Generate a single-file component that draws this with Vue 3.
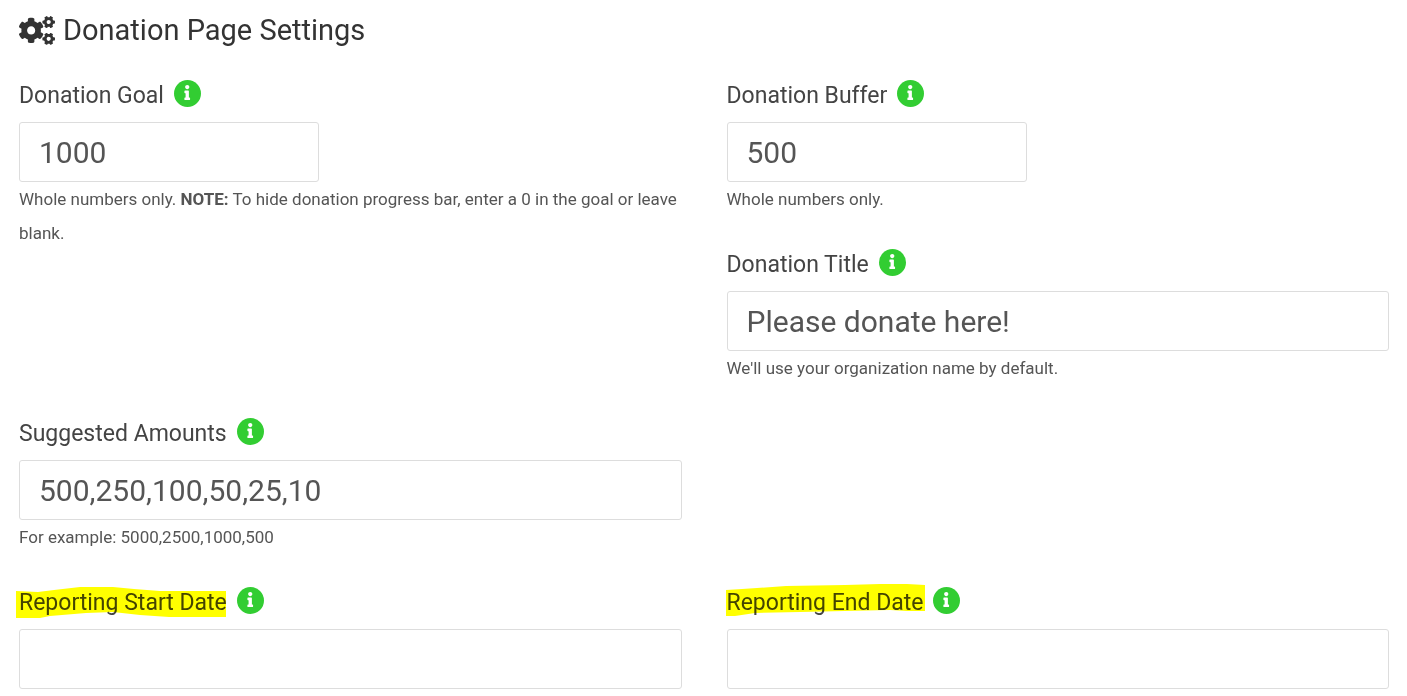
<script setup>
import { reactive } from 'vue'

const fields = reactive([
  { id: 'goal', label: 'Donation Goal', value: '1000', area: 'goal', short: true, help: 'Whole numbers only.', note: 'To hide donation progress bar, enter a 0 in the goal or leave blank.' },
  { id: 'buffer', label: 'Donation Buffer', value: '500', area: 'buffer', short: true, help: 'Whole numbers only.' },
  { id: 'title', label: 'Donation Title', value: 'Please donate here!', area: 'title', help: "We'll use your organization name by default." },
  { id: 'amounts', label: 'Suggested Amounts', value: '500,250,100,50,25,10', area: 'amounts', help: 'For example: 5000,2500,1000,500' },
  { id: 'start', label: 'Reporting Start Date', value: '', area: 'start', mark: '0,7 22,8 38,6 64,3 97,3 118,5 144,7 210,7 210,33 153,33 124,31 97,28 70,29 34,32 24,34 0,34' },
  { id: 'end', label: 'Reporting End Date', value: '', area: 'end', mark: '2,6 18,5 33,4 62,2 121,1 156,0 183,0 201,1 201,27 183,27 166,26 76,28 31,29 11,32 2,32' }
])
</script>

<template>
  <main class="page">
    <h1 class="heading">
      <svg class="cogs" viewBox="0 0 640 512" aria-hidden="true">
        <path d="M512.1 191l-8.2 14.3c-3 5.3-9.4 7.5-15.1 5.4-11.8-4.4-22.6-10.7-32.1-18.6-4.6-3.8-5.8-10.5-2.8-15.7l8.2-14.3c-6.9-8-12.3-17.3-15.9-27.4h-16.5c-6 0-11.2-4.3-12.2-10.3-2-12-2.1-24.6 0-37.1 1-6 6.2-10.4 12.2-10.4h16.5c3.6-10.1 9-19.4 15.9-27.4l-8.2-14.3c-3-5.2-1.9-11.9 2.8-15.7 9.5-7.9 20.4-14.2 32.1-18.6 5.7-2.1 12.1.1 15.1 5.4l8.2 14.3c10.5-1.9 21.2-1.9 31.7 0L552 6.3c3-5.3 9.4-7.5 15.1-5.4 11.8 4.4 22.6 10.7 32.1 18.6 4.6 3.8 5.8 10.5 2.8 15.7l-8.2 14.3c6.9 8 12.3 17.3 15.9 27.4h16.5c6 0 11.2 4.3 12.2 10.3 2 12 2.1 24.6 0 37.1-1 6-6.2 10.4-12.2 10.4h-16.5c-3.6 10.1-9 19.4-15.9 27.4l8.2 14.3c3 5.2 1.9 11.9-2.8 15.7-9.5 7.9-20.4 14.2-32.1 18.6-5.7 2.1-12.1-.1-15.1-5.4l-8.2-14.3c-10.4 1.9-21.2 1.9-31.7 0zm-10.5-58.8c38.5 29.6 82.4-14.3 52.8-52.8-38.5-29.7-82.4 14.3-52.8 52.8zM386.3 286.1l33.7 16.8c10.1 5.8 14.5 18.1 10.5 29.1-8.9 24.2-26.4 46.4-42.6 65.8-7.4 8.9-20.2 11.1-30.3 5.3l-29.1-16.8c-16 13.7-34.6 24.6-54.9 31.7v33.6c0 11.6-8.3 21.6-19.7 23.6-24.6 4.2-50.4 4.4-75.9 0-11.5-2-20-11.9-20-23.6V418c-20.3-7.2-38.9-18-54.9-31.7L74 403c-10 5.8-22.9 3.6-30.3-5.3-16.2-19.4-33.3-41.6-42.2-65.7-4-10.9.4-23.2 10.5-29.1l33.3-16.8c-3.9-20.9-3.9-42.4 0-63.4L12 205.8c-10.1-5.8-14.6-18.1-10.5-29 8.9-24.2 26-46.4 42.2-65.8 7.4-8.9 20.2-11.1 30.3-5.3l29.1 16.8c16-13.7 34.6-24.6 54.9-31.7V57.1c0-11.5 8.2-21.5 19.6-23.5 24.6-4.2 50.5-4.4 76-.1 11.5 2 20 11.9 20 23.6v33.6c20.3 7.2 38.9 18 54.9 31.7l29.1-16.8c10-5.8 22.9-3.6 30.3 5.3 16.2 19.4 33.2 41.6 42.1 65.8 4 10.9.1 23.2-10 29.1l-33.7 16.8c3.9 21 3.9 42.5 0 63.5zm-117.6 21.1c59.2-77-28.7-164.9-105.7-105.7-59.2 77 28.7 164.9 105.7 105.7zm243.4 182.7l-8.2 14.3c-3 5.3-9.4 7.5-15.1 5.4-11.8-4.4-22.6-10.7-32.1-18.6-4.6-3.8-5.8-10.5-2.8-15.7l8.2-14.3c-6.9-8-12.3-17.3-15.9-27.4h-16.5c-6 0-11.2-4.3-12.2-10.3-2-12-2.1-24.6 0-37.1 1-6 6.2-10.4 12.2-10.4h16.5c3.6-10.1 9-19.4 15.9-27.4l-8.2-14.3c-3-5.2-1.9-11.9 2.8-15.7 9.5-7.9 20.4-14.2 32.1-18.6 5.7-2.1 12.1.1 15.1 5.4l8.2 14.3c10.5-1.9 21.2-1.9 31.7 0l8.2-14.3c3-5.3 9.4-7.5 15.1-5.4 11.8 4.4 22.6 10.7 32.1 18.6 4.6 3.8 5.8 10.5 2.8 15.7l-8.2 14.3c6.9 8 12.3 17.3 15.9 27.4h16.5c6 0 11.2 4.3 12.2 10.3 2 12 2.1 24.6 0 37.1-1 6-6.2 10.4-12.2 10.4h-16.5c-3.6 10.1-9 19.4-15.9 27.4l8.2 14.3c3 5.2 1.9 11.9-2.8 15.7-9.5 7.9-20.4 14.2-32.1 18.6-5.7 2.1-12.1-.1-15.1-5.4l-8.2-14.3c-10.4 1.9-21.2 1.9-31.7 0zM501.6 431c38.5 29.6 82.4-14.3 52.8-52.8-38.5-29.6-82.4 14.3-52.8 52.8z" />
      </svg>
      Donation Page Settings
    </h1>

    <form class="grid" @submit.prevent>
      <div v-for="f in fields" :key="f.id" class="field" :class="f.area">
        <div class="label-row">
          <label :for="f.id">{{ f.label }}</label>
          <svg v-if="f.mark" class="mark" viewBox="0 0 210 36" aria-hidden="true">
            <polygon :points="f.mark" />
          </svg>
          <button class="info" type="button" :aria-label="'About ' + f.label">
            <svg viewBox="0 0 27 27" aria-hidden="true">
              <circle cx="13.5" cy="13.5" r="13.5" fill="#32cd32" />
              <path transform="translate(10.4 4.9) scale(.0295)" fill="#fff" d="M20 424.229h20V279.771H20c-11.046 0-20-8.954-20-20V212c0-11.046 8.954-20 20-20h112c11.046 0 20 8.954 20 20v212.229h20c11.046 0 20 8.954 20 20V492c0 11.046-8.954 20-20 20H20c-11.046 0-20-8.954-20-20v-47.771c0-11.046 8.954-20 20-20zM96 0C56.235 0 24 32.235 24 72s32.235 72 72 72 72-32.235 72-72S135.764 0 96 0z" />
            </svg>
          </button>
        </div>
        <input :id="f.id" v-model="f.value" type="text" :class="{ short: f.short }" />
        <p v-if="f.help" class="help">{{ f.help }} <template v-if="f.note"><strong>NOTE:</strong> {{ f.note }}</template></p>
      </div>
    </form>
  </main>
</template>

<style>
body {
  margin: 0;
  background: #fff;
}
</style>

<style scoped>
.page {
  padding: 9px 18px 7px 19px;
  font-family: Roboto, "Liberation Sans", sans-serif;
  color: #555;
}
.heading {
  display: flex;
  align-items: center;
  gap: 8px;
  margin: 0 0 28px;
  font-size: 29px;
  line-height: 43px;
  font-weight: 400;
  color: #333;
}
.cogs {
  width: 36px;
  height: 29px;
  fill: #333;
}
.grid {
  display: grid;
  grid-template-columns: 1fr 1fr;
  grid-template-areas:
    "goal buffer"
    "goal title"
    "amounts ."
    "start end";
  gap: 33px 45px;
}
.goal { grid-area: goal; }
.buffer { grid-area: buffer; }
.title { grid-area: title; }
.amounts { grid-area: amounts; }
.start { grid-area: start; }
.end { grid-area: end; }
.label-row {
  position: relative;
  display: flex;
  align-items: flex-start;
  gap: 10px;
  height: 28px;
  margin-bottom: 14px;
}
label {
  font-size: 23px;
  line-height: 32px;
  color: #444;
}
.mark {
  position: absolute;
  left: -3px;
  top: -3px;
  width: 210px;
  height: 36px;
  fill: #ff0;
  mix-blend-mode: multiply;
  pointer-events: none;
}
.info {
  position: relative;
  width: 27px;
  height: 27px;
  padding: 0;
  border: 0;
  border-radius: 50%;
  background: none;
  cursor: pointer;
}
.info svg {
  display: block;
  width: 27px;
  height: 27px;
}
input {
  display: block;
  box-sizing: border-box;
  width: 100%;
  height: 60px;
  padding: 0 19px;
  border: 1px solid #ddd;
  border-radius: 3px;
  background: #fff;
  font: 400 30px Roboto, "Liberation Sans", sans-serif;
  color: #555;
}
input.short {
  width: 300px;
}
.help {
  margin: 0;
  font-size: 17px;
  line-height: 34px;
}
</style>
